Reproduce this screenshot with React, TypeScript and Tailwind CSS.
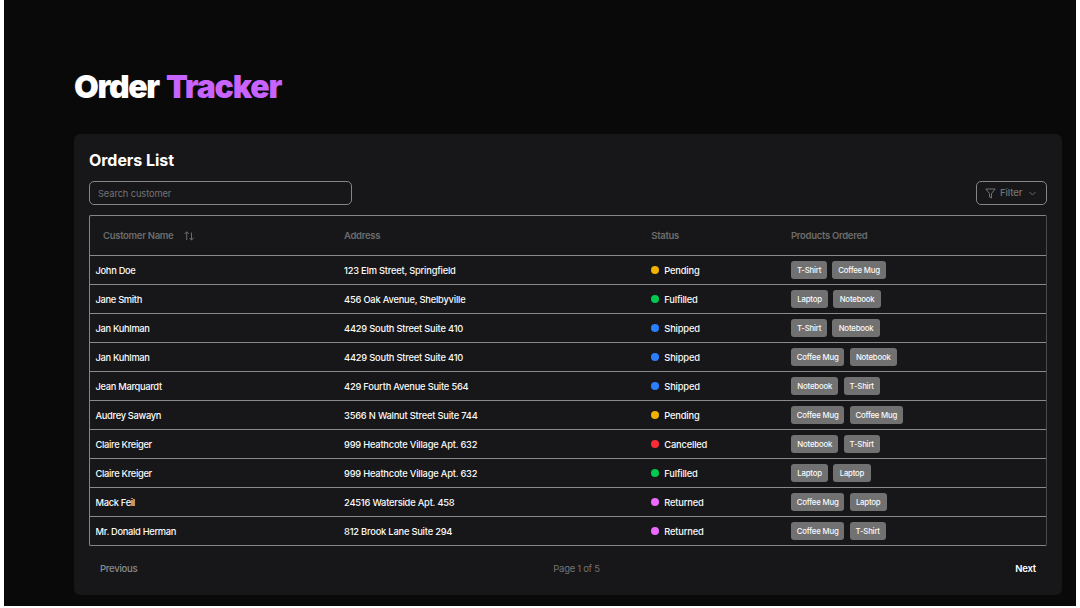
type Status = 'Pending' | 'Fulfilled' | 'Shipped' | 'Cancelled' | 'Returned';

interface Order {
  name: string;
  address: string;
  status: Status;
  products: string[];
}

const orders: Order[] = [
  { name: 'John Doe', address: '123 Elm Street, Springfield', status: 'Pending', products: ['T-Shirt', 'Coffee Mug'] },
  { name: 'Jane Smith', address: '456 Oak Avenue, Shelbyville', status: 'Fulfilled', products: ['Laptop', 'Notebook'] },
  { name: 'Jan Kuhlman', address: '4429 South Street Suite 410', status: 'Shipped', products: ['T-Shirt', 'Notebook'] },
  { name: 'Jan Kuhlman', address: '4429 South Street Suite 410', status: 'Shipped', products: ['Coffee Mug', 'Notebook'] },
  { name: 'Jean Marquardt', address: '429 Fourth Avenue Suite 564', status: 'Shipped', products: ['Notebook', 'T-Shirt'] },
  { name: 'Audrey Sawayn', address: '3566 N Walnut Street Suite 744', status: 'Pending', products: ['Coffee Mug', 'Coffee Mug'] },
  { name: 'Claire Kreiger', address: '999 Heathcote Village Apt. 632', status: 'Cancelled', products: ['Notebook', 'T-Shirt'] },
  { name: 'Claire Kreiger', address: '999 Heathcote Village Apt. 632', status: 'Fulfilled', products: ['Laptop', 'Laptop'] },
  { name: 'Mack Feil', address: '24516 Waterside Apt. 458', status: 'Returned', products: ['Coffee Mug', 'Laptop'] },
  { name: 'Mr. Donald Herman', address: '812 Brook Lane Suite 294', status: 'Returned', products: ['Coffee Mug', 'T-Shirt'] },
];

const dotColor: Record<Status, string> = {
  Pending: 'bg-[#f0b100]',
  Fulfilled: 'bg-[#00c950]',
  Shipped: 'bg-[#2b7fff]',
  Cancelled: 'bg-[#fb2c36]',
  Returned: 'bg-[#ed6aff]',
};

const badgeWidth: Record<string, string> = {
  'T-Shirt': 'w-[36.2px]',
  'Coffee Mug': 'w-[53.4px]',
  Laptop: 'w-[37.2px]',
  Notebook: 'w-[47.4px]',
};

const columns = 'grid grid-cols-[254px_307.3px_139.7px_1fr] items-center';

function Header() {
  return (
    <div className={`${columns} h-[39px] pt-[2px] text-[9.5px] font-semibold tracking-[-0.3px] text-[#6c6c6c]`}>
      <div className="flex items-center gap-[11px] pl-[13px]">
        Customer Name
        <svg className="mb-px size-[10px]" viewBox="0 0 10 10" fill="none" stroke="currentColor" strokeWidth="1">
          <path d="M0.5 3 2.7 0.8 4.9 3M2.7 0.8V9M5.5 7 7.5 9 9.7 7M7.5 9V1.5" />
        </svg>
      </div>
      <div>Address</div>
      <div>Status</div>
      <div>Products Ordered</div>
    </div>
  );
}

function Row({ order }: { order: Order }) {
  return (
    <div className={`${columns} h-[29px] border-t border-[#8a8a8a] text-[9.3px] font-medium text-[#fafafa]`}>
      <div className="pt-px pl-[5.5px] tracking-[-0.3px]">{order.name}</div>
      <div className="pt-px tracking-[-0.2px]">{order.address}</div>
      <div className="flex items-center gap-[5px] tracking-[-0.17px]">
        <span className={`size-2 rounded-full ${dotColor[order.status]}`} />
        <span className="pt-px">{order.status}</span>
      </div>
      <div className="flex gap-[5.2px]">
        {order.products.map((p, i) => (
          <span
            key={i}
            className={`flex h-[18px] items-center justify-center rounded-[3px] bg-[#717171] pt-px text-[7.8px] tracking-[-0.2px] whitespace-nowrap ${badgeWidth[p]}`}
          >
            {p}
          </span>
        ))}
      </div>
    </div>
  );
}

export default function App() {
  return (
    <div className="h-[608px] w-[1080px] overflow-hidden bg-white px-1 pb-0.5 font-['Inter',sans-serif]">
      <main className="h-full bg-[#090909] pt-[67px] pr-[14px] pl-[70px]">
        <h1 className="h-[67px] text-[32px] leading-[40px] font-black tracking-[-1.35px] text-white [word-spacing:2px]">
          Order <span className="tracking-[-1.2px] text-[#c763ff]">Tracker</span>
        </h1>
        <section className="h-[461px] rounded-md bg-[#171719] px-[15px] pt-4">
          <h2 className="text-[16px] leading-5 font-bold tracking-[-0.05px] text-white">Orders List</h2>
          <div className="mt-[11px] flex justify-between">
            <input
              className="h-6 w-[263px] rounded-[5px] border border-[#858585] bg-transparent px-2 text-[9.3px] tracking-[-0.1px] text-white outline-none placeholder:text-[#737373]"
              placeholder="Search customer"
            />
            <button className="mr-[0.5px] flex h-6 w-[70.5px] items-center rounded-[5px] border border-[#858585] pl-2 text-[9.5px] font-medium tracking-[-0.1px] text-[#737373]">
              <svg className="size-[11px]" viewBox="0 0 11 11" fill="none" stroke="currentColor" strokeWidth="1" strokeLinejoin="round">
                <path d="M0.8 1H10.2L6.5 5.5V10L4.5 9V5.5Z" />
              </svg>
              <span className="ml-[4px] pt-px">Filter</span>
              <svg className="ml-[7px] size-[7px]" viewBox="0 0 7 7" fill="none" stroke="currentColor" strokeWidth="0.9">
                <path d="M0.5 2 3.5 5 6.5 2" />
              </svg>
            </button>
          </div>
          <div className="mt-[10px] rounded-[2px] border border-[#858585] border-r-[#4a4a4b]">
            <Header />
            {orders.map((o, i) => (
              <Row key={i} order={o} />
            ))}
          </div>
          <div className="grid h-[46px] grid-cols-3 items-center pr-[11px] pl-[11px] text-[9.5px] font-medium">
            <button className="justify-self-start tracking-[-0.25px] text-[#8c8c8c]">Previous</button>
            <span className="justify-self-center pr-[9px] pl-[26px] font-normal tracking-[-0.3px] text-[#737373]">Page 1 of 5</span>
            <button className="justify-self-end font-semibold tracking-[-0.2px] text-white">Next</button>
          </div>
        </section>
      </main>
    </div>
  );
}
